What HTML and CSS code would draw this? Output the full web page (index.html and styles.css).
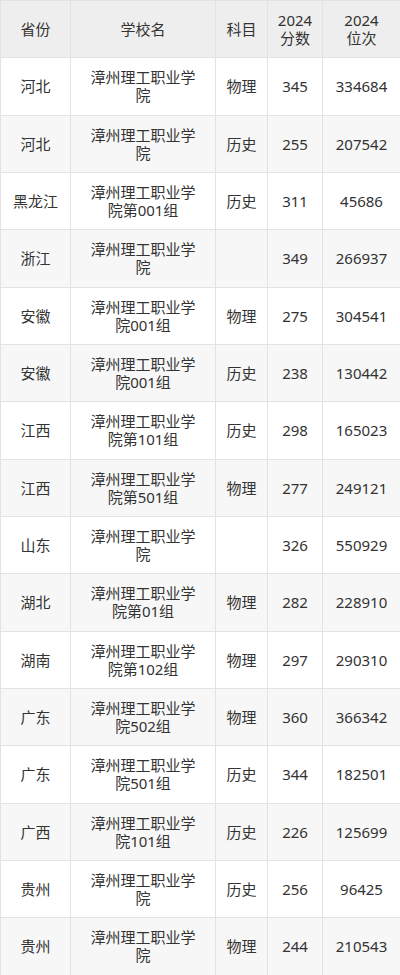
FILE: index.html
```html
<!DOCTYPE html>
<html lang="zh">
<head>
<meta charset="utf-8">
<link rel="stylesheet" href="styles.css">
</head>
<body>
<table class="score-table">
  <colgroup>
    <col class="c-prov"><col class="c-school"><col class="c-subj"><col class="c-score"><col class="c-rank">
  </colgroup>
  <thead>
    <tr><th>省份</th><th class="school">学校名</th><th>科目</th><th>2024<br>分数</th><th>2024<br>位次</th></tr>
  </thead>
  <tbody>
    <tr><td>河北</td><td class="school">漳州理工职业学院</td><td>物理</td><td>345</td><td>334684</td></tr>
    <tr><td>河北</td><td class="school">漳州理工职业学院</td><td>历史</td><td>255</td><td>207542</td></tr>
    <tr><td>黑龙江</td><td class="school">漳州理工职业学院第001组</td><td>历史</td><td>311</td><td>45686</td></tr>
    <tr><td>浙江</td><td class="school">漳州理工职业学院</td><td></td><td>349</td><td>266937</td></tr>
    <tr><td>安徽</td><td class="school">漳州理工职业学院001组</td><td>物理</td><td>275</td><td>304541</td></tr>
    <tr><td>安徽</td><td class="school">漳州理工职业学院001组</td><td>历史</td><td>238</td><td>130442</td></tr>
    <tr><td>江西</td><td class="school">漳州理工职业学院第101组</td><td>历史</td><td>298</td><td>165023</td></tr>
    <tr><td>江西</td><td class="school">漳州理工职业学院第501组</td><td>物理</td><td>277</td><td>249121</td></tr>
    <tr><td>山东</td><td class="school">漳州理工职业学院</td><td></td><td>326</td><td>550929</td></tr>
    <tr><td>湖北</td><td class="school">漳州理工职业学院第01组</td><td>物理</td><td>282</td><td>228910</td></tr>
    <tr><td>湖南</td><td class="school">漳州理工职业学院第102组</td><td>物理</td><td>297</td><td>290310</td></tr>
    <tr><td>广东</td><td class="school">漳州理工职业学院502组</td><td>物理</td><td>360</td><td>366342</td></tr>
    <tr><td>广东</td><td class="school">漳州理工职业学院501组</td><td>历史</td><td>344</td><td>182501</td></tr>
    <tr><td>广西</td><td class="school">漳州理工职业学院101组</td><td>历史</td><td>226</td><td>125699</td></tr>
    <tr><td>贵州</td><td class="school">漳州理工职业学院</td><td>历史</td><td>256</td><td>96425</td></tr>
    <tr><td>贵州</td><td class="school">漳州理工职业学院</td><td>物理</td><td>244</td><td>210543</td></tr>
  </tbody>
</table>
</body>
</html>
```
FILE: styles.css
```css
html, body {
  margin: 0;
  padding: 0;
  background: #ffffff;
}
body {
  font-family: "Noto Sans", "Noto Sans CJK SC", sans-serif;
  color: #333333;
}
.score-table {
  width: 400px;
  table-layout: fixed;
  border-collapse: collapse;
  font-size: 15px;
  line-height: 18px;
}
.c-prov { width: 70px; }
.c-school { width: 145px; }
.c-subj { width: 52px; }
.c-score { width: 55px; }
.c-rank { width: 78px; }
.score-table th,
.score-table td {
  height: 57.33px;
  padding: 0 3px;
  box-sizing: border-box;
  border: 1px solid #e2e2e2;
  text-align: center;
  vertical-align: middle;
  font-weight: normal;
}
.score-table th {
  background: #eeeeee;
  line-height: 18px;
}
.score-table td.school,
.score-table th.school {
  padding: 0 15px;
}
.score-table tbody tr:nth-child(even) td {
  background: #f7f7f7;
}
```
